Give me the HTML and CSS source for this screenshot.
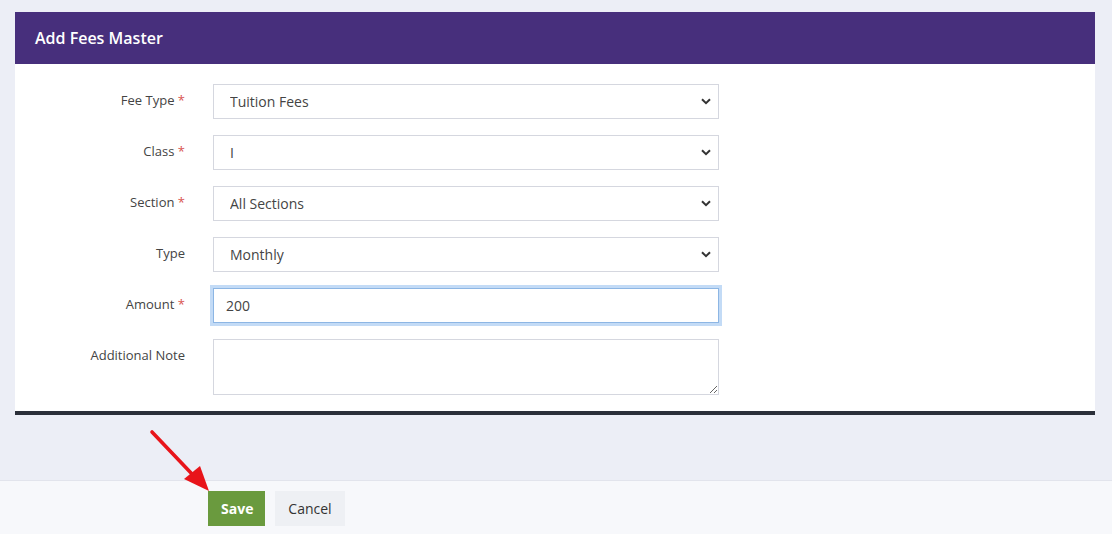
FILE: index.html
```html
<!DOCTYPE html>
<html>
  <head>
    <meta charset="utf-8">
    <title>Add Fees Master</title>
    <link rel="stylesheet" href="styles.css">
  </head>
  <body>
    <div class="page">
      <div class="card">
        <div class="card-head">Add Fees Master</div>
        <form class="card-body">
          <label class="lbl">Fee Type <span class="req">*</span></label>
          <div class="sel">
            <select><option>Tuition Fees</option></select>
            <svg class="chev" width="10" height="7" viewBox="0 0 10 7"><path d="M1 1.2l4 4 4-4" fill="none" stroke="#333" stroke-width="2"/></svg>
          </div>

          <label class="lbl">Class <span class="req">*</span></label>
          <div class="sel">
            <select><option>I</option></select>
            <svg class="chev" width="10" height="7" viewBox="0 0 10 7"><path d="M1 1.2l4 4 4-4" fill="none" stroke="#333" stroke-width="2"/></svg>
          </div>

          <label class="lbl">Section <span class="req">*</span></label>
          <div class="sel">
            <select><option>All Sections</option></select>
            <svg class="chev" width="10" height="7" viewBox="0 0 10 7"><path d="M1 1.2l4 4 4-4" fill="none" stroke="#333" stroke-width="2"/></svg>
          </div>

          <label class="lbl">Type</label>
          <div class="sel">
            <select><option>Monthly</option></select>
            <svg class="chev" width="10" height="7" viewBox="0 0 10 7"><path d="M1 1.2l4 4 4-4" fill="none" stroke="#333" stroke-width="2"/></svg>
          </div>

          <label class="lbl">Amount <span class="req">*</span></label>
          <input class="field focus" type="text" value="200">

          <label class="lbl">Additional Note</label>
          <textarea class="field note"></textarea>
        </form>
      </div>
    </div>
    <div class="footer">
      <button class="btn save">Save</button>
      <button class="btn cancel">Cancel</button>
    </div>
    <svg class="arrow" width="80" height="80" viewBox="0 0 80 80">
      <line x1="12" y1="12" x2="52" y2="54" stroke="#e8141a" stroke-width="3.6" stroke-linecap="round"/>
      <polygon points="44,59 60,46 69,71" fill="#e8141a"/>
    </svg>
  </body>
</html>
```

FILE: styles.css
```css
* {
  box-sizing: border-box;
}
html, body {
  height: 100%;
}
body {
  margin: 0;
  background: #eceef6;
  font-family: "Open Sans", "Noto Sans", sans-serif;
  color: #333;
  display: flex;
  flex-direction: column;
  position: relative;
}
.page {
  padding: 12px 17px 0 15px;
}
.card {
  background: #fff;
  border-bottom: 4px solid #2b2f3a;
}
.card-head {
  background: #472f7c;
  color: #fff;
  font-weight: 600;
  font-size: 16px;
  height: 52px;
  line-height: 52px;
  padding-left: 20px;
}
.card-body {
  display: grid;
  grid-template-columns: 170px 506px;
  column-gap: 28px;
  row-gap: 16px;
  padding: 20px 0 16px;
}
.lbl {
  text-align: right;
  font-size: 13px;
  color: #444;
  padding-top: 7px;
  line-height: 18px;
}
.req {
  color: #d9534f;
}
.sel {
  position: relative;
}
.sel select, .field {
  width: 100%;
  height: 35px;
  border: 1px solid #d5d7df;
  border-radius: 0;
  background: #fff;
  font-family: "Open Sans", "Noto Sans", sans-serif;
  font-size: 14px;
  color: #444;
  padding: 0 12px;
  outline: none;
}
.sel select {
  appearance: none;
  -webkit-appearance: none;
  padding-left: 16px;
}
.chev {
  position: absolute;
  right: 8px;
  top: 14px;
  pointer-events: none;
}
.focus {
  border-color: #8db6e4;
  box-shadow: 0 0 0 3px #c3dbf6;
}
.note {
  height: 56px;
  resize: vertical;
  padding-top: 6px;
}
.footer {
  margin-top: auto;
  height: 54px;
  background: #f7f8fb;
  border-top: 1px solid #e2e4ec;
  padding: 10px 0 0 208px;
  display: flex;
  align-items: flex-start;
  gap: 10px;
}
.btn {
  height: 35px;
  border: 0;
  font-family: "Open Sans", "Noto Sans", sans-serif;
  font-size: 14px;
  padding: 0 13px;
}
.save {
  background: #6a9a3e;
  color: #fff;
  font-weight: 700;
  width: 57px;
}
.cancel {
  background: #eef0f4;
  color: #333;
  width: 70px;
}
.arrow {
  position: absolute;
  left: 140px;
  top: 420px;
}
```
